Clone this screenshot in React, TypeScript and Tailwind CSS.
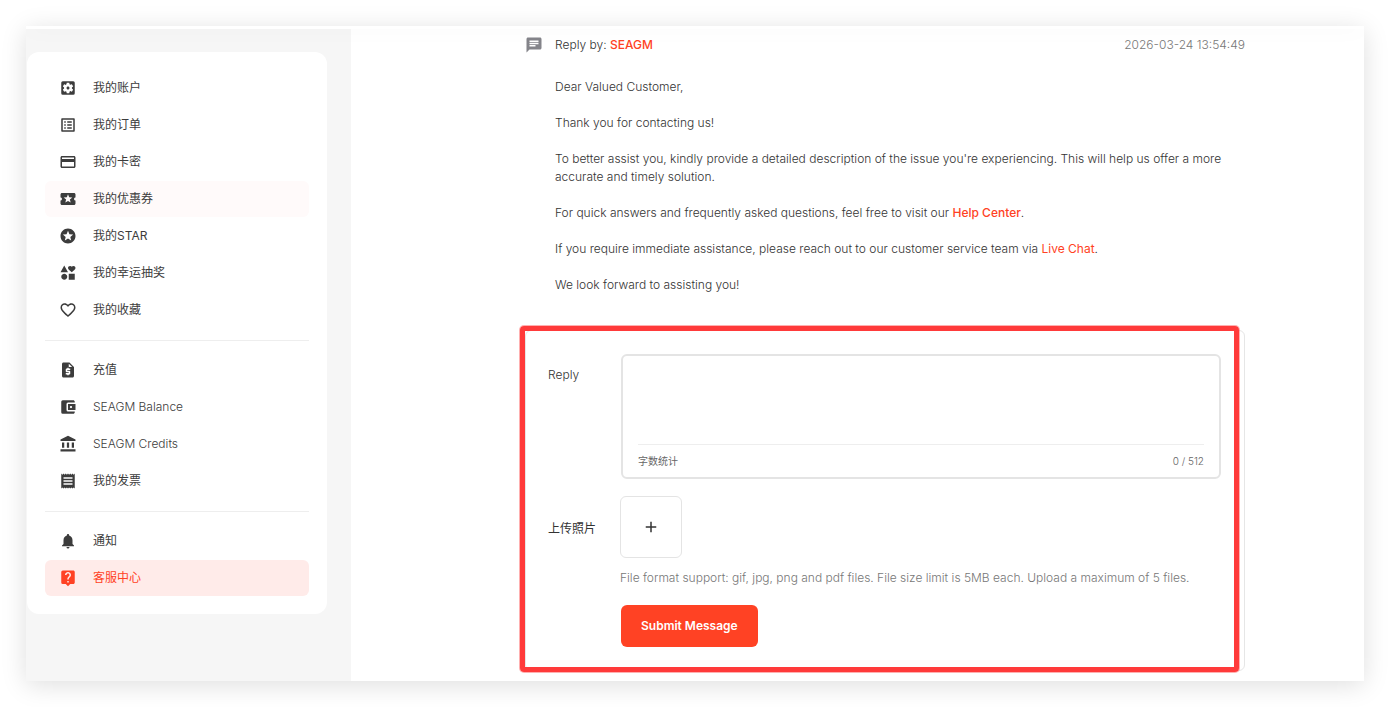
import { useState } from "react";
import type { IconType } from "react-icons";
import {
  MdAccountBalance,
  MdAccountBalanceWallet,
  MdAdd,
  MdChat,
  MdCreditCard,
  MdFavoriteBorder,
  MdInterests,
  MdListAlt,
  MdLiveHelp,
  MdLocalActivity,
  MdNotifications,
  MdReceipt,
  MdRequestQuote,
  MdSettingsApplications,
  MdStars,
} from "react-icons/md";

type MenuItem = {
  label: string;
  icon: IconType;
  latin?: boolean;
  state?: "hover" | "active";
};

const MAX_LENGTH = 512;

const menuGroups: MenuItem[][] = [
  [
    { label: "我的账户", icon: MdSettingsApplications },
    { label: "我的订单", icon: MdListAlt },
    { label: "我的卡密", icon: MdCreditCard },
    { label: "我的优惠券", icon: MdLocalActivity, state: "hover" },
    { label: "我的STAR", icon: MdStars },
    { label: "我的幸运抽奖", icon: MdInterests },
    { label: "我的收藏", icon: MdFavoriteBorder },
  ],
  [
    { label: "充值", icon: MdRequestQuote },
    { label: "SEAGM Balance", icon: MdAccountBalanceWallet, latin: true },
    { label: "SEAGM Credits", icon: MdAccountBalance, latin: true },
    { label: "我的发票", icon: MdReceipt },
  ],
  [
    { label: "通知", icon: MdNotifications },
    { label: "客服中心", icon: MdLiveHelp, state: "active" },
  ],
];

function MenuLink({ item }: { item: MenuItem }) {
  const Icon = item.icon;
  const tone =
    item.state === "active"
      ? "bg-[#ffebe9] text-[#ff4224]"
      : item.state === "hover"
      ? "bg-[#fffafa] text-[#3c3c3c]"
      : "text-[#3c3c3c]";

  return (
    <li className="mb-px">
      <a href="#" className={`flex h-9 items-center gap-4 rounded-md pl-[14px] ${tone}`}>
        <Icon size={18} className="shrink-0" />
        <span className={item.latin ? "" : "font-normal"}>{item.label}</span>
      </a>
    </li>
  );
}

function Sidebar() {
  return (
    <aside className="w-[325px] shrink-0 bg-[#f6f6f6] pt-[23px] pr-6 pl-px">
      <nav className="rounded-xl bg-white px-[18px] pt-[18px] pb-[17px]">
        {menuGroups.map((group, i) => (
          <ul key={i} className={i > 0 ? "mt-3 border-t border-[#eeeeee] pt-[11px]" : ""}>
            {group.map((item) => (
              <MenuLink key={item.label} item={item} />
            ))}
          </ul>
        ))}
      </nav>
    </aside>
  );
}

function Message() {
  return (
    <article className="flex gap-3">
      <MdChat size={18} className="shrink-0 text-[#84848a]" />
      <div className="min-w-0 flex-1">
        <header className="flex justify-between">
          <p>
            Reply by: <span className="font-medium text-[#ff4224]">SEAGM</span>
          </p>
          <time className="text-[#777777]">2026-03-24 13:54:49</time>
        </header>
        <div className="mt-6 flex max-w-[680px] flex-col gap-[18px]">
          <p>Dear Valued Customer,</p>
          <p>Thank you for contacting us!</p>
          <p>
            To better assist you, kindly provide a detailed description of the issue you're experiencing. This will
            help us offer a more accurate and timely solution.
          </p>
          <p>
            For quick answers and frequently asked questions, feel free to visit our{" "}
            <a href="#" className="font-medium text-[#ff4224]">Help Center</a>.
          </p>
          <p>
            If you require immediate assistance, please reach out to our customer service team via{" "}
            <a href="#" className="font-normal text-[#ff4224]">Live Chat</a>.
          </p>
          <p>We look forward to assisting you!</p>
        </div>
      </div>
    </article>
  );
}

function ReplyForm() {
  const [text, setText] = useState("");

  return (
    <form
      className="relative mt-9 mb-[10px] rounded-md border border-[#e6e6e6] px-[22px] py-[23px]"
      onSubmit={(e) => e.preventDefault()}
    >
      {/* Highlight frame over the form */}
      <div className="pointer-events-none absolute -top-[5px] right-[5px] -bottom-[2px] -left-[6px] rounded-sm border-[5px] border-[#ff3a3a] ring-1 ring-[#ff3a3a]/40" />

      <div className="flex pr-px">
        <label htmlFor="reply" className="w-[73px] shrink-0 pt-3">Reply</label>
        <div className="min-w-0 flex-1 rounded-md border-2 border-[#e4e4e4] px-[15px]">
          <textarea
            id="reply"
            value={text}
            maxLength={MAX_LENGTH}
            onChange={(e) => setText(e.target.value)}
            className="block h-[88px] w-full resize-none pt-2 outline-none"
          />
          <div className="flex h-[33px] items-center justify-between border-t border-[#eeeeee] text-[10px] text-[#666666]">
            <span className="font-normal">字数统计</span>
            <span>{text.length} / {MAX_LENGTH}</span>
          </div>
        </div>
      </div>

      <div className="mt-[17px] flex items-center">
        <label htmlFor="add-photo" className="w-[72px] shrink-0 pt-1 font-normal">上传照片</label>
        <button
          id="add-photo"
          type="button"
          className="flex size-[62px] items-center justify-center rounded-md border border-[#e4e4e4]"
        >
          <MdAdd size={18} />
        </button>
      </div>

      <div className="pl-[72px]">
        <p className="mt-[11px] text-[#777777]">
          File format support: gif, jpg, png and pdf files. File size limit is 5MB each. Upload a maximum of 5 files.
        </p>
        <button
          type="submit"
          className="mt-[18px] ml-px h-[42px] rounded-md bg-[#ff4224] px-5 font-semibold text-white"
        >
          Submit Message
        </button>
      </div>
    </form>
  );
}

export default function App() {
  return (
    <div className="min-h-screen bg-white p-[26px] font-['Inter','Noto_Sans_CJK_SC',sans-serif] text-[12px] leading-[18px] font-light text-[#333333]">
      <div className="bg-white shadow-[0_4px_24px_rgba(0,0,0,0.13)]">
        <div className="overflow-hidden">
          {/* Lower edge of the page header, casting its shadow on the content */}
          <div className="relative h-[3px] bg-white shadow-[0_0_20px_rgba(0,0,0,0.08)]" />
          <div className="flex">
            <Sidebar />
            <main className="min-w-0 flex-1 pt-[7px] pr-[119px] pl-[174px]">
              <Message />
              <ReplyForm />
            </main>
          </div>
        </div>
      </div>
    </div>
  );
}
